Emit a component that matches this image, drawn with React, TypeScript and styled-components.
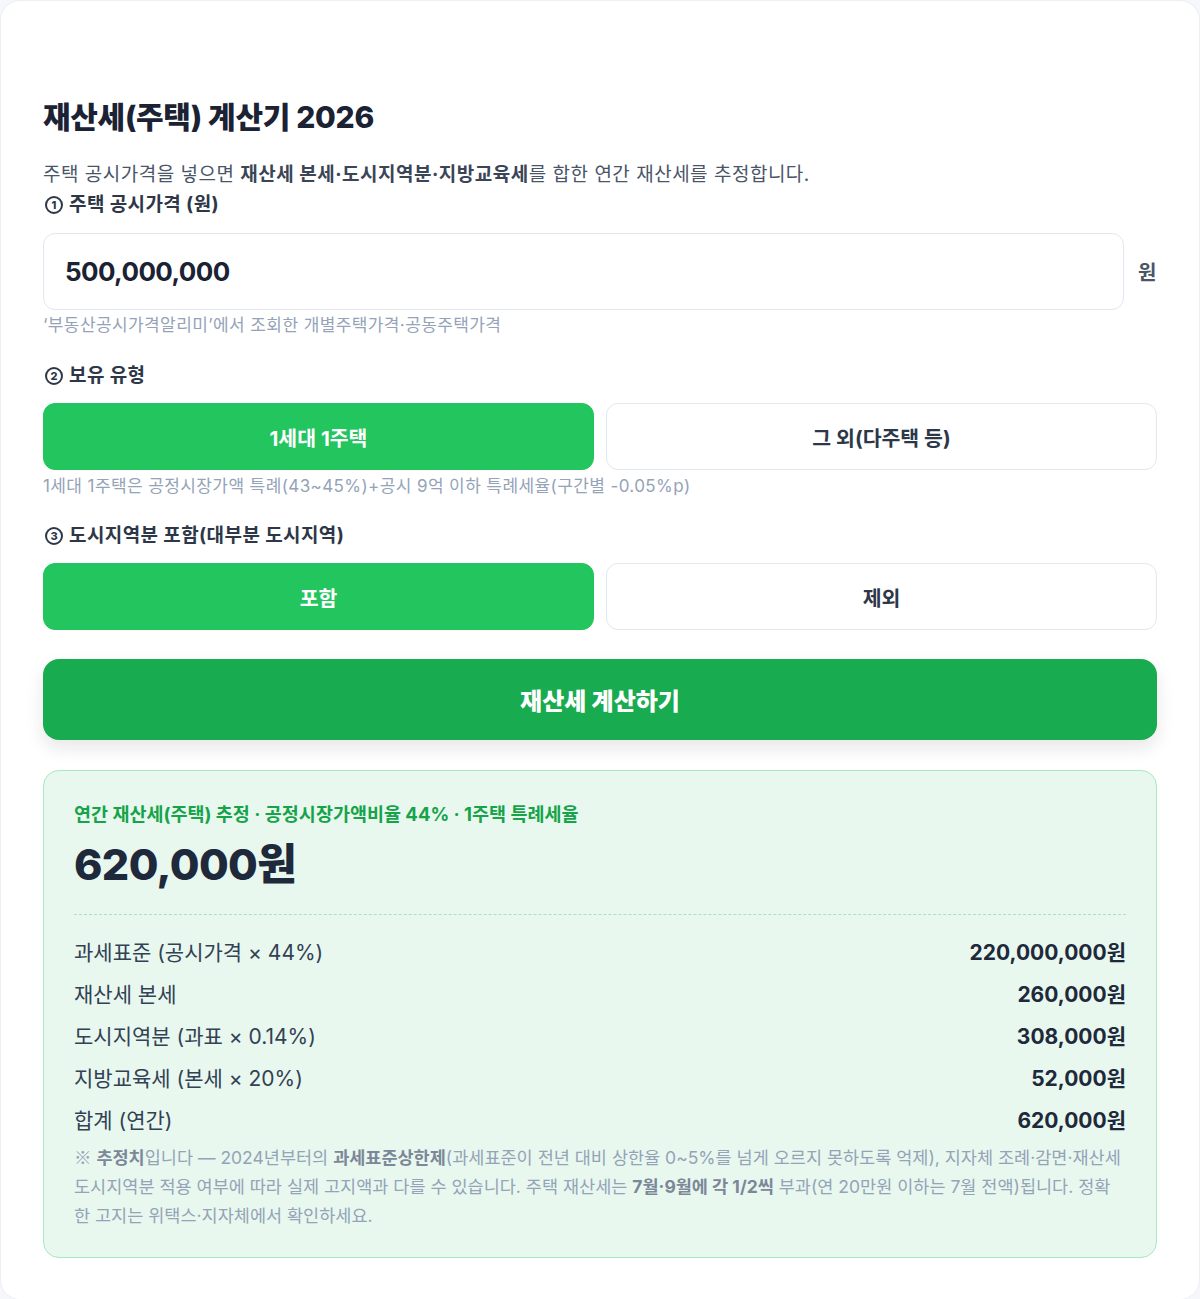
import React, { useState } from "react"
import styled, { createGlobalStyle } from "styled-components"

const GlobalStyle = createGlobalStyle`
  html, body {
    margin: 0;
    padding: 0;
    background: #f5f7fa;
  }
  body {
    font-family: Inter, "Noto Sans CJK KR", "Noto Sans", sans-serif;
    color: #1e293b;
  }
  * { box-sizing: border-box; }
`

const Card = styled.div`
  width: 1200px;
  min-height: 1298px;
  background: #ffffff;
  border: 1px solid #eceff4;
  border-radius: 20px;
  padding: 0 42px 41px;
`

const Title = styled.h1`
  margin: 96px 0 0;
  font-size: 30px;
  line-height: 40px;
  font-weight: 800;
  color: #1a2233;
  letter-spacing: -0.3px;
`

const Desc = styled.p`
  margin: 24px 0 0;
  font-size: 19px;
  line-height: 28px;
  color: #4a5568;
  letter-spacing: 0.5px;

  b {
    font-weight: 700;
    color: #3a4556;
  }
`

const Field = styled.section<{ $top: number }>`
  margin-top: ${p => p.$top}px;
`

const Label = styled.div`
  display: flex;
  align-items: center;
  gap: 6px;
  font-size: 19px;
  line-height: 26px;
  font-weight: 700;
  color: #2d3748;
  letter-spacing: 0.4px;
`

const Circled = styled.span`
  display: inline-flex;
  align-items: center;
  justify-content: center;
  width: 18px;
  height: 18px;
  border: 2px solid #2d3748;
  border-radius: 50%;
  font-size: 11px;
  line-height: 1;
  font-weight: 800;
  letter-spacing: 0;
  margin-left: 2px;
`

const InputRow = styled.div`
  display: flex;
  align-items: center;
  gap: 14px;
  margin-top: 15px;
`

const AmountInput = styled.input`
  width: 1081px;
  height: 77px;
  border: 1px solid #e2e8f0;
  border-radius: 12px;
  padding: 0 21px;
  font-family: Inter, "Noto Sans CJK KR", sans-serif;
  font-size: 26px;
  font-weight: 700;
  letter-spacing: -0.6px;
  color: #1a2233;
  outline: none;
  background: #ffffff;
`

const Unit = styled.span`
  font-size: 20px;
  font-weight: 700;
  color: #4a5568;
`

const Hint = styled.div<{ $top?: number }>`
  margin-top: ${p => p.$top ?? 4}px;
  font-size: 17px;
  line-height: 22px;
  color: #94a3b8;
  letter-spacing: 0.4px;
`

const Toggle = styled.div`
  display: grid;
  grid-template-columns: 1fr 1fr;
  gap: 12px;
  margin-top: 14px;
`

const ToggleButton = styled.button<{ $active: boolean }>`
  height: 67px;
  border-radius: 12px;
  border: 1px solid ${p => (p.$active ? "#22c55e" : "#e2e8f0")};
  background: ${p => (p.$active ? "#22c55e" : "#ffffff")};
  color: ${p => (p.$active ? "#ffffff" : "#2d3748")};
  font-family: Inter, "Noto Sans CJK KR", sans-serif;
  font-size: 20.5px;
  font-weight: 700;
  cursor: pointer;
`

const CalcButton = styled.button`
  display: block;
  width: 100%;
  height: 81px;
  margin-top: 29px;
  border: none;
  border-radius: 16px;
  background: #19ab50;
  color: #ffffff;
  font-family: Inter, "Noto Sans CJK KR", sans-serif;
  font-size: 24px;
  font-weight: 800;
  box-shadow: 0 8px 18px rgba(15, 23, 42, 0.1);
  cursor: pointer;
`

const Result = styled.div`
  margin-top: 30px;
  background: #e8f8ee;
  border: 1.5px solid #a9e7c0;
  border-radius: 16px;
  padding: 31px 30px 27px;
`

const ResultHead = styled.div`
  font-size: 18.5px;
  line-height: 24px;
  font-weight: 700;
  color: #16a34a;
`

const Total = styled.div`
  margin-top: 14px;
  font-size: 43px;
  line-height: 48px;
  font-weight: 800;
  color: #1e293b;
  letter-spacing: -0.6px;
`

const Divider = styled.hr`
  margin: 26px 0 24px;
  border: none;
  border-top: 1.5px dashed #a9e2bd;
`

const Rows = styled.div`
  display: flex;
  flex-direction: column;
  gap: 14px;
`

const Row = styled.div`
  display: flex;
  justify-content: space-between;
  align-items: center;
  font-size: 21px;
  line-height: 28px;
  color: #334155;
`

const Value = styled.span`
  font-weight: 700;
  color: #1e293b;
`

const Note = styled.p`
  margin: 7px 0 0;
  font-size: 17.5px;
  line-height: 29px;
  color: #94a3b8;

  b {
    font-weight: 700;
    color: #7c8799;
  }
`

const Mark = styled.span`
  font-family: "Noto Sans CJK KR", sans-serif;
`

const breakdown = [
  { label: "과세표준 (공시가격 × 44%)", value: "220,000,000원" },
  { label: "재산세 본세", value: "260,000원" },
  { label: "도시지역분 (과표 × 0.14%)", value: "308,000원" },
  { label: "지방교육세 (본세 × 20%)", value: "52,000원" },
  { label: "합계 (연간)", value: "620,000원" },
]

export default function App() {
  const [price, setPrice] = useState("500,000,000")
  const [owner, setOwner] = useState(0)
  const [urban, setUrban] = useState(0)

  return (
    <>
      <GlobalStyle />
      <Card>
        <Title>재산세(주택) 계산기 2026</Title>
        <Desc>
          주택 공시가격을 넣으면 <b>재산세 본세·도시지역분·지방교육세</b>를 합한 연간 재산세를 추정합니다.
        </Desc>

        <Field $top={3}>
          <Label><Circled>1</Circled>주택 공시가격 (원)</Label>
          <InputRow>
            <AmountInput value={price} onChange={e => setPrice(e.target.value)} />
            <Unit>원</Unit>
          </InputRow>
          <Hint>‘부동산공시가격알리미’에서 조회한 개별주택가격·공동주택가격</Hint>
        </Field>

        <Field $top={27}>
          <Label><Circled>2</Circled>보유 유형</Label>
          <Toggle>
            <ToggleButton $active={owner === 0} onClick={() => setOwner(0)}>1세대 1주택</ToggleButton>
            <ToggleButton $active={owner === 1} onClick={() => setOwner(1)}>그 외(다주택 등)</ToggleButton>
          </Toggle>
          <Hint $top={5}>1세대 1주택은 공정시장가액 특례(43~45%)+공시 9억 이하 특례세율(구간별 -0.05%p)</Hint>
        </Field>

        <Field $top={26}>
          <Label><Circled>3</Circled>도시지역분 포함(대부분 도시지역)</Label>
          <Toggle>
            <ToggleButton $active={urban === 0} onClick={() => setUrban(0)}>포함</ToggleButton>
            <ToggleButton $active={urban === 1} onClick={() => setUrban(1)}>제외</ToggleButton>
          </Toggle>
        </Field>

        <CalcButton>재산세 계산하기</CalcButton>

        <Result>
          <ResultHead>연간 재산세(주택) 추정 · 공정시장가액비율 44% · 1주택 특례세율</ResultHead>
          <Total>620,000원</Total>
          <Divider />
          <Rows>
            {breakdown.map(row => (
              <Row key={row.label}>
                <span>{row.label}</span>
                <Value>{row.value}</Value>
              </Row>
            ))}
          </Rows>
          <Note>
            <Mark>※</Mark> <b>추정치</b>입니다 — 2024년부터의 <b>과세표준상한제</b>(과세표준이 전년 대비 상한율 0~5%를 넘게 오르지 못하도록 억제), 지자체 조례·감면·재산세 도시지역분 적용 여부에 따라 실제 고지액과 다를 수 있습니다. 주택 재산세는 <b>7월·9월에 각 1/2씩</b> 부과(연 20만원 이하는 7월 전액)됩니다. 정확한 고지는 위택스·지자체에서 확인하세요.
          </Note>
        </Result>
      </Card>
    </>
  )
}
